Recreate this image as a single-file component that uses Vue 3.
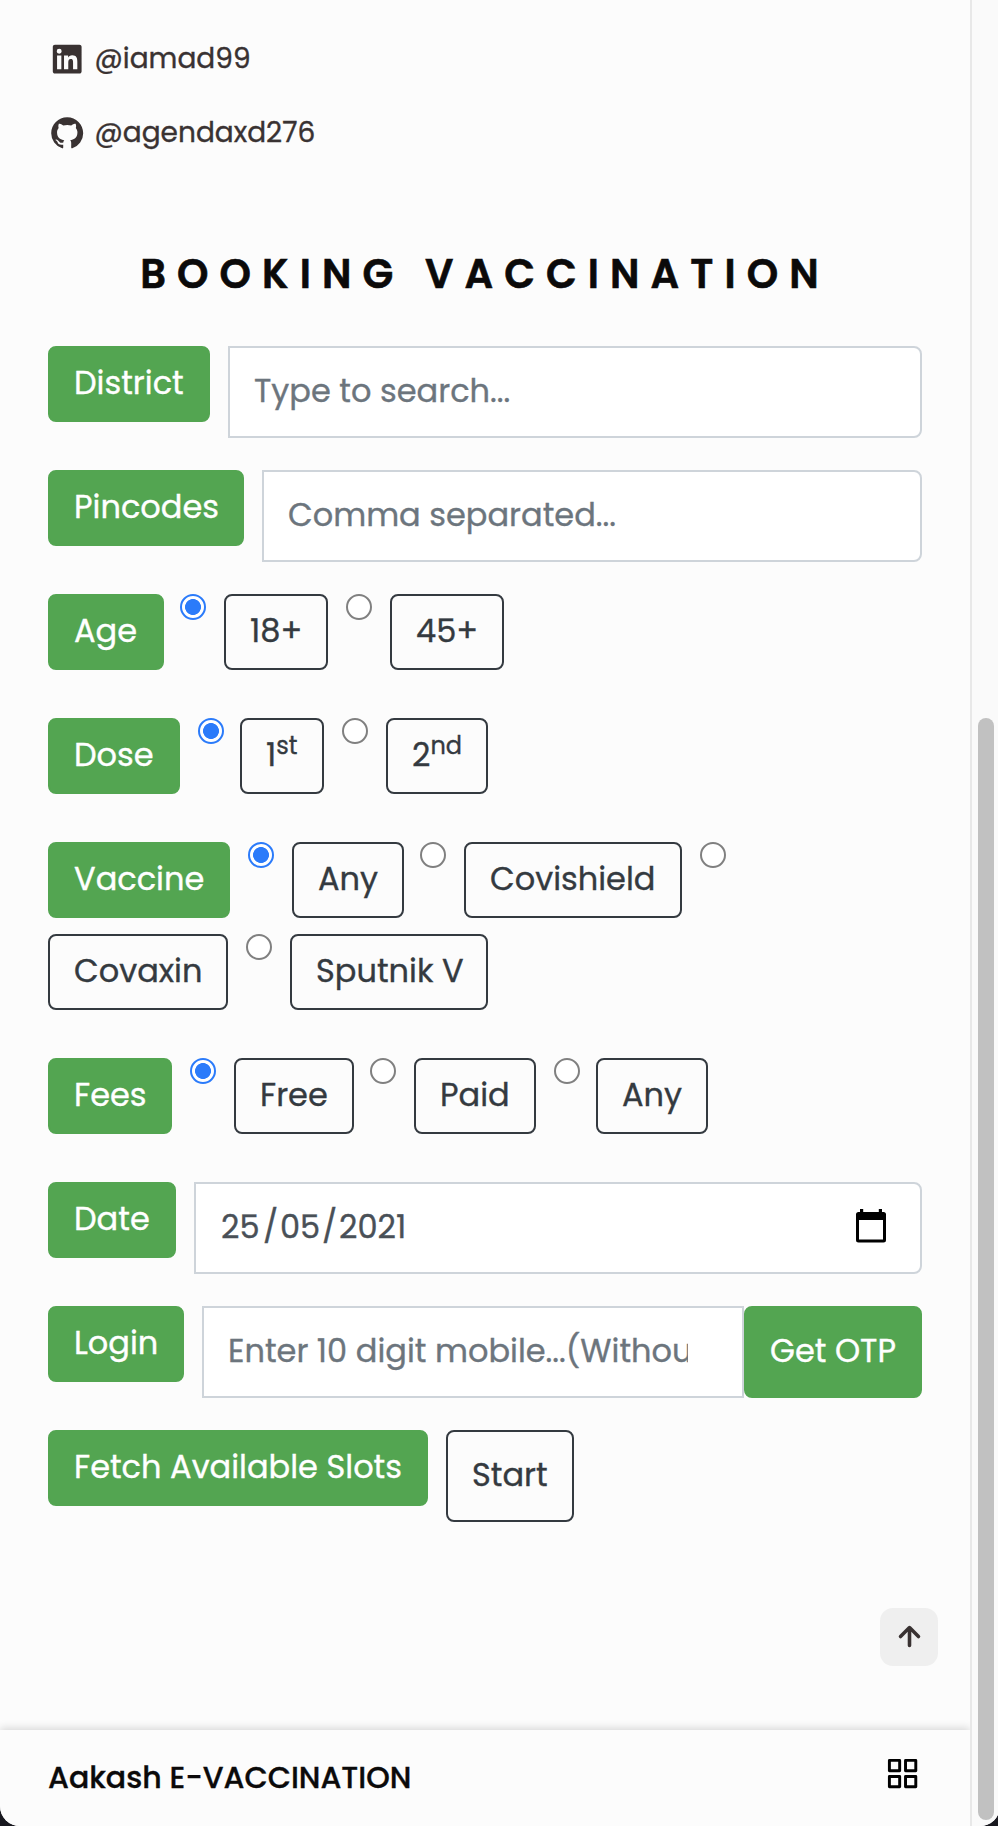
<script setup>
// Each choice: g = space before, w = box width
const groups = [
  {
    label: 'Age', w: 116,
    items: [
      { radio: true, on: true, g: 16 }, { text: '18+', g: 18, w: 104 },
      { radio: true, g: 18 }, { text: '45+', g: 18, w: 114 },
    ],
  },
  {
    label: 'Dose', w: 132,
    items: [
      { radio: true, on: true, g: 18 }, { text: '1', sup: 'st', g: 16, w: 84 },
      { radio: true, g: 18 }, { text: '2', sup: 'nd', g: 18, w: 102 },
    ],
  },
  {
    label: 'Vaccine', w: 182,
    items: [
      { radio: true, on: true, g: 18 }, { text: 'Any', g: 18, w: 112 },
      { radio: true, g: 16 }, { text: 'Covishield', g: 18, w: 218 },
      { radio: true, g: 18 }, { text: 'Covaxin', g: 0, w: 180 },
      { radio: true, g: 18 }, { text: 'Sputnik V', g: 18, w: 198 },
    ],
  },
  {
    label: 'Fees', w: 124,
    items: [
      { radio: true, on: true, g: 18 }, { text: 'Free', g: 18, w: 120 },
      { radio: true, g: 16 }, { text: 'Paid', g: 18, w: 122 },
      { radio: true, g: 18 }, { text: 'Any', g: 16, w: 112 },
    ],
  },
]
const box = (i) => ({ width: i.w + 'px', marginLeft: (i.g || 0) + 'px' })
</script>

<template>
  <div class="window">
    <div class="page">
      <main>
        <a class="link">
          <svg class="ri" viewBox="0 0 24 24"><path d="M18.335 18.339H15.67v-4.177c0-.996-.02-2.278-1.39-2.278-1.389 0-1.601 1.084-1.601 2.205v4.25h-2.666V9.75h2.56v1.17h.035c.358-.674 1.228-1.387 2.528-1.387 2.7 0 3.2 1.778 3.2 4.091v4.715zM7.003 8.575a1.546 1.546 0 0 1-1.548-1.549 1.548 1.548 0 1 1 1.547 1.549zm1.336 9.764H5.666V9.75H8.34v8.589zM19.67 3H4.329C3.593 3 3 3.58 3 4.297v15.406C3 20.42 3.594 21 4.328 21h15.338C20.4 21 21 20.42 21 19.703V4.297C21 3.58 20.4 3 19.666 3h.003z" /></svg>
          <span>@iamad99</span>
        </a>
        <a class="link">
          <svg class="ri" viewBox="0 0 24 24"><path d="M12 2C6.475 2 2 6.475 2 12a9.994 9.994 0 0 0 6.838 9.488c.5.087.687-.213.687-.476 0-.237-.013-1.024-.013-1.862-2.512.463-3.162-.612-3.362-1.175-.113-.288-.6-1.175-1.025-1.413-.35-.187-.85-.65-.013-.662.788-.013 1.35.725 1.538 1.025.9 1.512 2.338 1.087 2.912.825.088-.65.35-1.087.638-1.337-2.225-.25-4.55-1.113-4.55-4.938 0-1.088.387-1.987 1.025-2.688-.1-.25-.45-1.275.1-2.65 0 0 .837-.262 2.75 1.026a9.28 9.28 0 0 1 2.5-.338c.85 0 1.7.112 2.5.337 1.912-1.3 2.75-1.024 2.75-1.024.55 1.375.2 2.4.1 2.65.637.7 1.025 1.587 1.025 2.687 0 3.838-2.337 4.688-4.562 4.938.362.312.675.912.675 1.85 0 1.337-.013 2.412-.013 2.75 0 .262.188.574.688.474A10.016 10.016 0 0 0 22 12c0-5.525-4.475-10-10-10z" /></svg>
          <span>@agendaxd276</span>
        </a>

        <h1>BOOKING VACCINATION</h1>

        <div class="row field">
          <span class="label district">District</span>
          <div class="input">Type to search...</div>
        </div>
        <div class="row field">
          <span class="label pincodes">Pincodes</span>
          <div class="input">Comma separated...</div>
        </div>

        <div v-for="g in groups" :key="g.label" class="row choices">
          <span class="label" :style="box(g)">{{ g.label }}</span>
          <template v-for="(i, n) in g.items" :key="n">
            <span v-if="i.radio" class="radio" :class="{ on: i.on }" :style="{ marginLeft: i.g + 'px' }"></span>
            <span v-else class="option" :style="box(i)">{{ i.text }}<sup v-if="i.sup">{{ i.sup }}</sup></span>
          </template>
        </div>

        <div class="row field">
          <span class="label date">Date</span>
          <div class="input when">
            <span class="dd">25</span><span class="sl">/</span><span class="dd">05</span><span class="sl">/</span><span>2021</span>
            <svg class="cal" viewBox="0 0 30 34"><path fill-rule="evenodd" d="M4 0h3.2v3h15.6V0H26v3h1.5A2.5 2.5 0 0 1 30 5.5V31a2.5 2.5 0 0 1-2.5 2.5h-25A2.5 2.5 0 0 1 0 31V5.5A2.5 2.5 0 0 1 2.5 3H4zM3 11v19.500h24V11z" /></svg>
          </div>
        </div>
        <div class="row field">
          <span class="label login">Login</span>
          <div class="input mobile"><span>Enter 10 digit mobile...(Withou</span></div>
          <button class="otp">Get OTP</button>
        </div>
        <div class="row field">
          <span class="label fetch">Fetch Available Slots</span>
          <button class="start">Start</button>
        </div>
      </main>

      <a class="up">
        <svg viewBox="0 0 24 24"><path d="M17.71,11.29l-5-5a1,1,0,0,0-.33-.21,1,1,0,0,0-.76,0,1,1,0,0,0-.33.21l-5,5a1,1,0,0,0,1.42,1.42L11,9.41V17a1,1,0,0,0,2,0V9.41l3.29,3.3a1,1,0,0,0,1.42,0A1,1,0,0,0,17.71,11.29Z" /></svg>
      </a>

      <footer>
        <span>Aakash E-VACCINATION</span>
        <svg viewBox="0 0 24 24"><path d="M10,13H3a1,1,0,0,0-1,1v7a1,1,0,0,0,1,1h7a1,1,0,0,0,1-1V14A1,1,0,0,0,10,13ZM9,20H4V15H9ZM21,2H14a1,1,0,0,0-1,1v7a1,1,0,0,0,1,1h7a1,1,0,0,0,1-1V3A1,1,0,0,0,21,2ZM20,9H15V4h5Zm1,4H14a1,1,0,0,0-1,1v7a1,1,0,0,0,1,1h7a1,1,0,0,0,1-1V14A1,1,0,0,0,21,13Zm-1,7H15V15h5ZM10,2H3A1,1,0,0,0,2,3v7a1,1,0,0,0,1,1h7a1,1,0,0,0,1-1V3A1,1,0,0,0,10,2ZM9,9H4V4H9Z" /></svg>
      </footer>
    </div>
    <div class="track"><div class="thumb"></div></div>
  </div>
</template>

<style>
body { background: #18181f; overflow: hidden; }
</style>

<style scoped>
* { box-sizing: border-box; }
.window {
  display: flex;
  width: 1000px;
  height: 1826px;
  overflow: hidden;
  border-radius: 0 0 20px 20px;
  background: #fcfcfc;
  font-family: Poppins, Inter, "Open Sans", sans-serif;
  font-feature-settings: "cv11";
  font-size: 32px;
  white-space: nowrap;
  -webkit-text-stroke: 0.35px currentColor;
}
.page { width: 970px; height: 100%; display: flex; flex-direction: column; overflow: hidden; }
main { padding: 22px 48px 0; height: 1608px; }
.link { display: flex; align-items: center; height: 74px; color: #393232; font-size: 28px; }
.ri { width: 38.4px; height: 38.4px; margin-right: 8px; fill: currentColor; flex: none; }
h1 {
  margin: 76px 0 44px;
  height: 56px;
  line-height: 56px;
  font-size: 40px;
  font-weight: 600;
  letter-spacing: 11.1px;
  text-align: center;
  color: #0b0a0a;
  -webkit-text-stroke: 0.6px currentColor;
}
.row { display: flex; align-items: flex-start; }
.field { height: 92px; margin-bottom: 32px; }
.choices { flex-wrap: wrap; row-gap: 16px; margin-bottom: 48px; padding-right: 40px; }
.label, .option {
  flex: none;
  height: 76px;
  padding: 0 24px;
  border: 2px solid #53a551;
  border-radius: 8px;
  line-height: 69px;
  background: #53a551;
  color: #fff;
}
.option { border-color: #343a40; background: transparent; color: #343a40; }
.option sup { font-size: 24px; line-height: 0; position: relative; top: -12px; vertical-align: baseline; }
.radio { flex: none; width: 26px; height: 26px; border: 2px solid #808080; border-radius: 50%; background: #fff; }
.radio.on { border-color: #2b7bfa; background: radial-gradient(circle, #2b7bfa 7.6px, #fff 8.3px); }
.input {
  display: flex;
  flex: 1;
  min-width: 0;
  height: 92px;
  margin-left: 18px;
  padding: 0 24px;
  border: 2px solid #ced4da;
  border-radius: 0 8px 8px 0;
  background: #fff;
  color: #6c757d;
  line-height: 85px;
}
.district { width: 162px; }
.pincodes { width: 196px; }
.date { width: 128px; }
.login { width: 136px; }
.fetch { width: 380px; }
.when { padding-left: 25px; color: #495057; }
.dd { width: 40px; }
.sl { width: 19px; text-align: center; }
.cal { width: 30px; height: 34px; margin: 25px 10px 0 auto; fill: #000; }
.mobile { border-radius: 0; padding-right: 54px; }
.mobile span { overflow: hidden; }
button {
  display: block;
  flex: none;
  height: 92px;
  padding: 0 0 3px 24px;
  border-radius: 8px;
  font: inherit;
  font-feature-settings: inherit;
  line-height: 85px;
  text-align: left;
}
.otp { width: 178px; border: 2px solid #53a551; background: #53a551; color: #fff; }
.start { width: 128px; margin-left: 18px; border: 2px solid #343a40; background: transparent; color: #343a40; }
.up {
  display: flex;
  align-items: center;
  justify-content: center;
  align-self: flex-end;
  width: 58px;
  height: 58px;
  margin-right: 32px;
  padding-bottom: 2px;
  border-radius: 13px;
  background: #efefef;
}
.up svg { width: 43px; height: 43px; fill: #393232; }
footer {
  display: flex;
  justify-content: space-between;
  height: 96px;
  margin-top: 64px;
  padding: 0 50px 0 48px;
  background: #fcfcfc;
  box-shadow: 0 -2px 8px rgba(0, 0, 0, 0.15);
  color: #0b0a0a;
  font-size: 30px;
  font-weight: 500;
  line-height: 95px;
}
footer svg { width: 35.2px; height: 35.2px; margin-top: 26px; }
.track { width: 30px; padding: 718px 0 0 6px; border-left: 2px solid #e8e8e8; background: #fafafa; }
.thumb { width: 16px; height: 1102px; border-radius: 8px; background: #c1c1c1; }
</style>
